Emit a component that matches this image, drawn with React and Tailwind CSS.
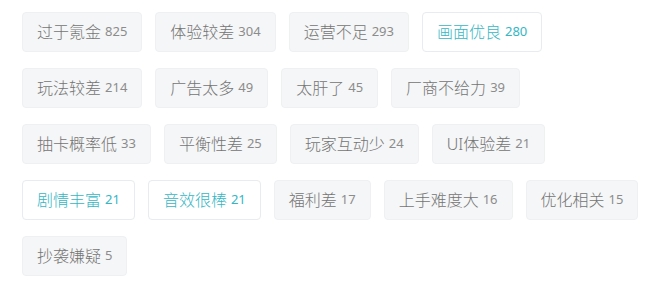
import React from "react";

const tags = [
  { name: "过于氪金", count: 825 },
  { name: "体验较差", count: 304 },
  { name: "运营不足", count: 293 },
  { name: "画面优良", count: 280, good: true },
  { name: "玩法较差", count: 214 },
  { name: "广告太多", count: 49 },
  { name: "太肝了", count: 45 },
  { name: "厂商不给力", count: 39 },
  { name: "抽卡概率低", count: 33 },
  { name: "平衡性差", count: 25 },
  { name: "玩家互动少", count: 24 },
  { name: "UI体验差", count: 21 },
  { name: "剧情丰富", count: 21, good: true },
  { name: "音效很棒", count: 21, good: true },
  { name: "福利差", count: 17 },
  { name: "上手难度大", count: 16 },
  { name: "优化相关", count: 15 },
  { name: "抄袭嫌疑", count: 5 },
];

const Tag = ({ name, count, good }) => (
  <div
    className={
      good
        ? "h-10 flex items-center px-[14px] rounded border border-[#e8ebef] bg-white text-[#34b6c4]"
        : "h-10 flex items-center px-[14px] rounded border border-[#eef0f2] bg-[#f5f6f7] text-[#747474]"
    }
  >
    <span className="text-base font-light">{name}</span>
    <span className={good ? "ml-1 text-[13px]" : "ml-1 text-[13px] text-[#8c8c8c]"}>{count}</span>
  </div>
);

export default function App() {
  return (
    <div
      className="w-[650px] h-[296px] bg-white pl-[22px] pr-2 pt-3"
      style={{ fontFamily: '"Noto Sans", "Noto Sans CJK SC", sans-serif' }}
    >
      <div className="flex flex-wrap gap-x-[13px] gap-y-4">
        {tags.map((t) => (
          <Tag key={t.name} {...t} />
        ))}
      </div>
    </div>
  );
}
